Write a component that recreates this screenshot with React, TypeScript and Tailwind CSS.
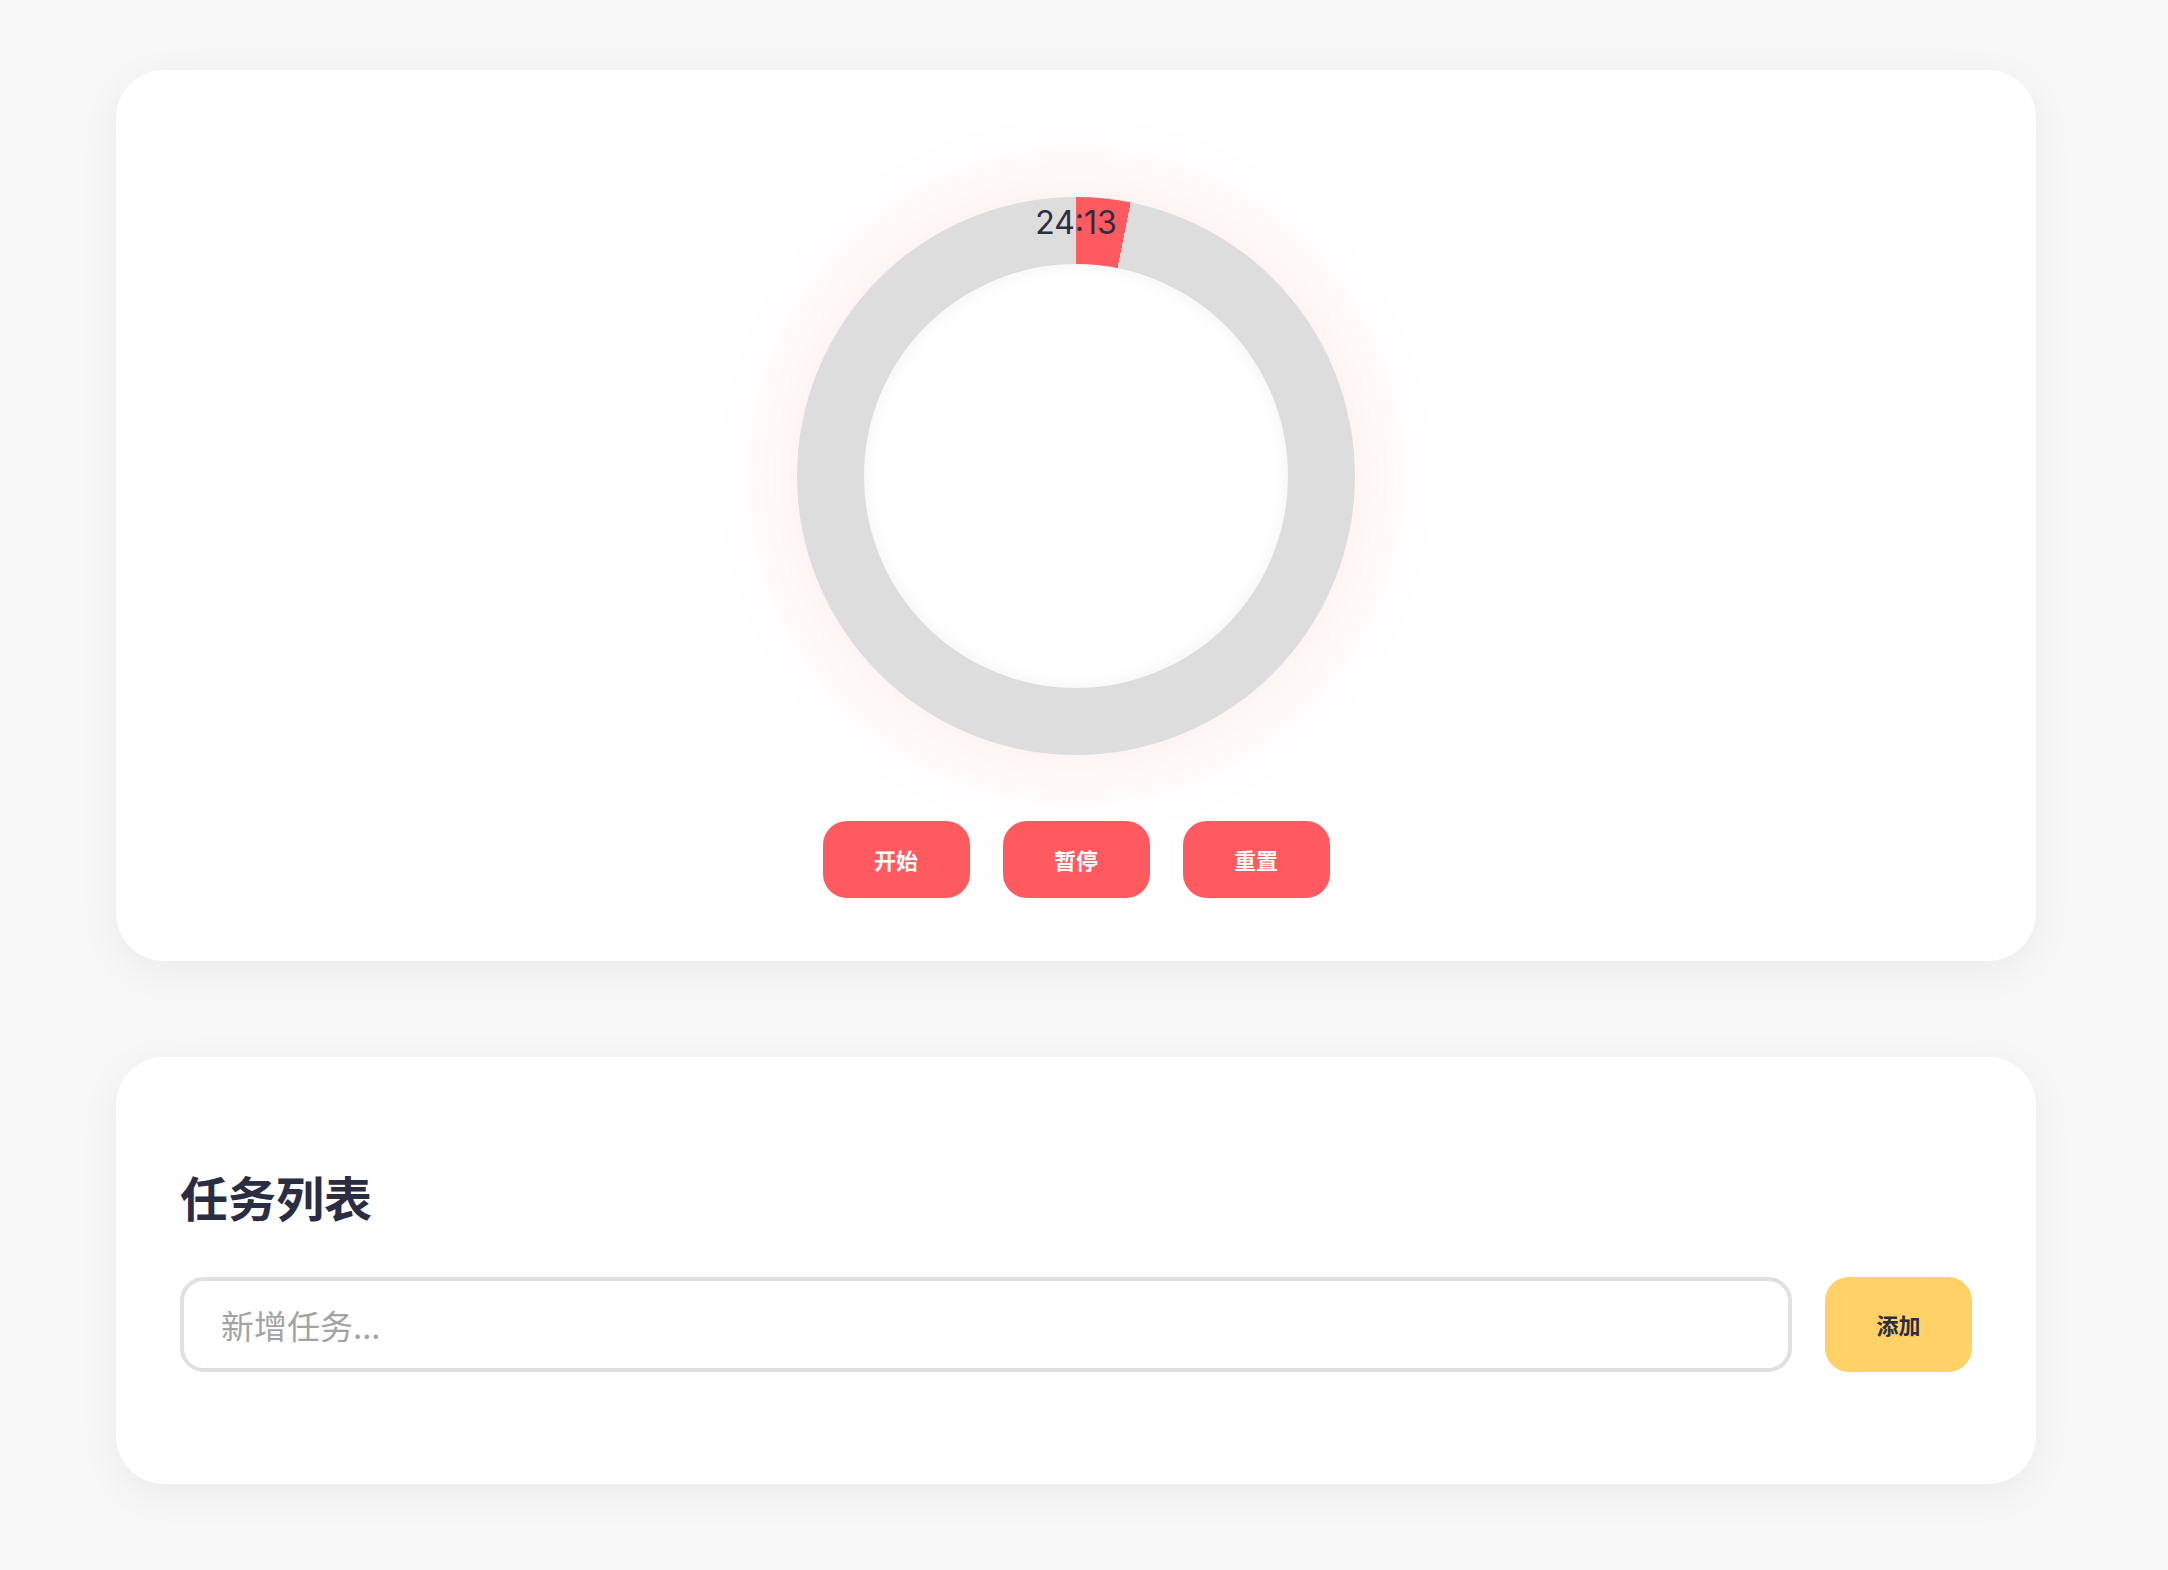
import { useState } from 'react';

const TOTAL = 25 * 60;

function fmt(sec: number): string {
  const m = Math.floor(sec / 60);
  const s = sec % 60;
  return `${String(m).padStart(2, '0')}:${String(s).padStart(2, '0')}`;
}

export default function App() {
  const [remaining] = useState(24 * 60 + 13);
  const [task, setTask] = useState('');

  const deg = ((TOTAL - remaining) / TOTAL) * 360;

  return (
    <div className="min-h-[1570px] bg-[#f8f8f8] pt-[70px] pl-[116px] font-['Inter','Noto_Sans_CJK_SC',sans-serif]">
      <div className="w-[1920px]">
        {/* 计时器 */}
        <section className="flex flex-col items-center rounded-[48px] bg-white px-16 pt-16 pb-[63px] shadow-[0_10px_40px_rgba(0,0,0,0.06)]">
          <div
            className="relative mt-[63px] mb-[66px] flex h-[558px] w-[558px] items-center justify-center rounded-full shadow-[0_0_90px_rgba(255,90,95,0.14)]"
            style={{
              background: `conic-gradient(#ff5a5f 0deg ${deg}deg, #dddddd ${deg}deg 360deg)`,
            }}
          >
            <div className="h-[424px] w-[424px] rounded-full bg-white shadow-[inset_0_0_18px_rgba(0,0,0,0.06)]" />
            <span className="absolute left-1/2 top-[2px] -translate-x-1/2 font-['Inter',sans-serif] text-[32px] text-[#2b2d42]">
              {fmt(remaining)}
            </span>
          </div>

          <div className="flex gap-[33px]">
            {['开始', '暂停', '重置'].map((t) => (
              <button
                key={t}
                className="h-[77px] w-[147px] rounded-[24px] bg-[#ff5a5f] font-['Noto_Sans_CJK_SC',sans-serif] text-[22px] font-bold text-white"
              >
                {t}
              </button>
            ))}
          </div>
        </section>

        {/* 任务列表 */}
        <section className="mt-24 rounded-[48px] bg-white px-16 pt-16 pb-[112px] shadow-[0_10px_40px_rgba(0,0,0,0.06)]">
          <h2 className="mt-[39px] font-['Noto_Sans_CJK_SC',sans-serif] text-[48px] font-bold leading-[72px] text-[#2b2d42]">
            任务列表
          </h2>
          <div className="mt-[45px] flex gap-[33px]">
            <input
              value={task}
              onChange={(e) => setTask(e.target.value)}
              placeholder="新增任务..."
              className="h-[95px] flex-1 rounded-[24px] border-[4px] border-[#e0e0e0] bg-white px-[37px] font-['Noto_Sans_CJK_SC',sans-serif] text-[33px] text-[#2b2d42] outline-none placeholder:text-[#a3a3a3]"
            />
            <button className="h-[95px] w-[147px] rounded-[24px] bg-[#ffd166] font-['Noto_Sans_CJK_SC',sans-serif] text-[22px] font-bold text-[#2b2d42]">
              添加
            </button>
          </div>
        </section>
      </div>
    </div>
  );
}
